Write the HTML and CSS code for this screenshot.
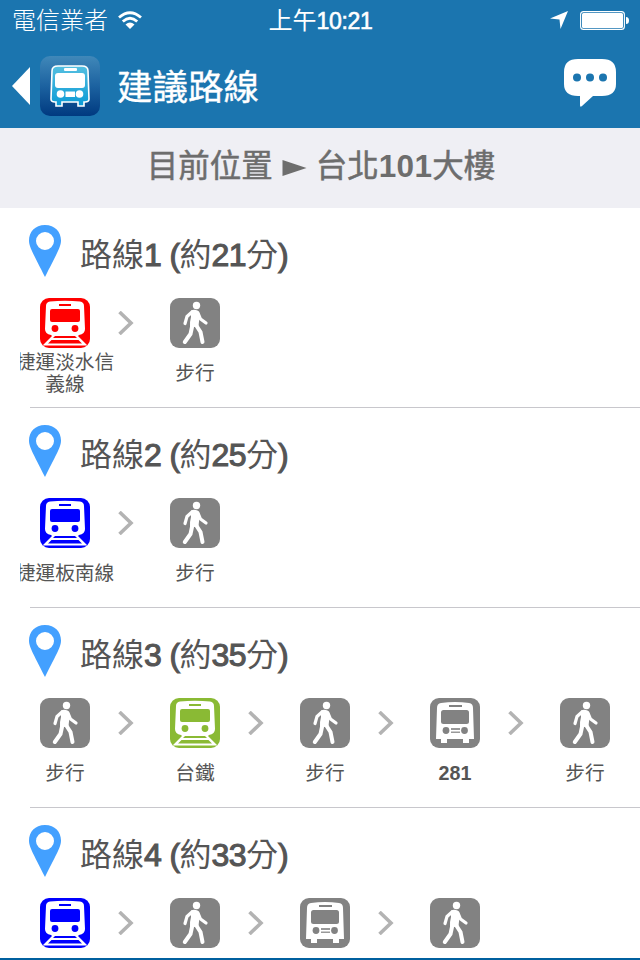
FILE: index.html
```html
<!DOCTYPE html>
<html lang="zh-Hant">
<head>
<meta charset="UTF-8">
<meta name="viewport" content="width=device-width, initial-scale=1.0">
<title>建議路線</title>
<link rel="stylesheet" href="styles.css">
</head>
<body>

<!-- shared icons -->
<svg class="icon-defs">
    <symbol id="pin" viewBox="0 0 34 52">
        <path fill="#43a0ff" fill-rule="evenodd" d="M17 0C7 0 1 7 1 15.500C1 22 5 28 17 52C29 28 33 22 33 15.500C33 7 27 0 17 0ZM17 7A9 9 0 1 1 17 25A9 9 0 1 1 17 7Z"/>
    </symbol>
    <symbol id="train" viewBox="0 0 50 50">
        <rect width="50" height="50" rx="9" fill="currentColor"/>
        <path fill="#fff" d="M6 8Q6 4 10 3.500Q25 2 40 3.500Q44 4 44 8L45 31Q45 36 39 37L38 38L47.500 47.500H2.500L12 38L11 37Q5 36 5 31Z"/>
        <rect x="19" y="6" width="12" height="2" fill="currentColor"/>
        <rect x="10" y="11" width="30" height="13" rx="2" fill="currentColor"/>
        <circle cx="15" cy="30.500" r="3.400" fill="currentColor"/>
        <circle cx="35" cy="30.500" r="3.400" fill="currentColor"/>
        <path fill="currentColor" d="M15 38H35L37 40H13ZM11.500 42H38.500L42 45.500H8Z"/>
    </symbol>
    <symbol id="walk" viewBox="0 0 50 50">
        <rect width="50" height="50" rx="9" fill="#828282"/>
        <circle cx="26.500" cy="7.500" r="3.700" fill="#fff"/>
        <path fill="#fff" d="M21 12.500Q24 11 27.500 12.500Q30 14 29.500 19L28.500 28L20 30Q19.500 24 21 19Z"/>
        <g fill="none" stroke="#fff" stroke-linecap="round" stroke-linejoin="round">
            <path stroke-width="3.200" d="M22 14L17 18.500L15 25.500M28 15L30.500 21L36 25"/>
            <path stroke-width="4" d="M22 29L20.500 36L14.800 44M26 27L30.500 34L32.500 44"/>
        </g>
    </symbol>
    <symbol id="bus" viewBox="0 0 50 50">
        <rect width="50" height="50" rx="9" fill="#828282"/>
        <path fill="#fff" d="M7 10Q7 5.500 11 5Q25 3 39 5Q43 5.500 43 10L44 41H39V45H33V41H17V45H11V41H6Z"/>
        <rect x="19" y="7" width="13" height="2" fill="#828282"/>
        <rect x="11" y="12" width="28" height="14" rx="2.500" fill="#828282"/>
        <circle cx="16" cy="32.500" r="3.400" fill="#828282"/>
        <circle cx="34.500" cy="32.500" r="3.400" fill="#828282"/>
        <path fill="#999" d="M21 30H30V32H21ZM21 33.500H30V35H21Z"/>
    </symbol>
    <symbol id="next" viewBox="0 0 16 24">
        <path fill="none" stroke="#b3b3b3" stroke-width="3.600" d="M1.500 1L13 12L1.500 23"/>
    </symbol>
</svg>

<div class="screen">
    <header class="header">
        <div class="status">
            <div class="carrier">
                <span>電信業者</span>
                <svg class="wifi" viewBox="0 0 24 18">
                    <path fill="none" stroke="#fff" stroke-width="2.800" d="M1 6.500Q12 -3 23 6.500M4.800 10.500Q12 4 19.200 10.500"/>
                    <path fill="#fff" d="M7.500 13.500Q12 9.500 16.500 13.500L12 18Z"/>
                </svg>
            </div>
            <div class="time">上午<b>10:21</b></div>
            <div class="indicators">
                <svg class="location" viewBox="0 0 18 18"><path fill="#fff" d="M18 0L10.500 18L9.500 8.500L0 7.500Z"/></svg>
                <svg class="battery" viewBox="0 0 49 19">
                    <rect x=".6" y=".6" width="43.800" height="17.800" rx="3" fill="none" stroke="#fff" stroke-width="1.100"/>
                    <rect x="2" y="2" width="41" height="15" rx="1.500" fill="#fff"/>
                    <path fill="#fff" d="M46 6Q49 6 49 9.500Q49 13 46 13Z"/>
                </svg>
            </div>
        </div>
        <div class="navbar">
            <svg class="back" viewBox="0 0 18 38"><path fill="#fff" d="M18 0V38L0 19Z"/></svg>
            <svg class="logo" viewBox="0 0 60 60">
                <defs>
                    <linearGradient id="logoBg" x1="0" y1="0" x2="0" y2="1">
                        <stop offset="0" stop-color="#4088b9"/>
                        <stop offset=".5" stop-color="#1c62a0"/>
                        <stop offset="1" stop-color="#003a80"/>
                    </linearGradient>
                    <linearGradient id="logoBus" x1="0" y1="0" x2="0" y2="1">
                        <stop offset="0" stop-color="#55bfe0"/>
                        <stop offset="1" stop-color="#0b9bd6"/>
                    </linearGradient>
                </defs>
                <rect width="60" height="60" rx="10" fill="url(#logoBg)"/>
                <path fill="url(#logoBus)" stroke="#fff" stroke-width="1.600" d="M12 15Q12 10 18 10H42Q48 10 48 15L49 43Q49 46 45 46H44V50H38V46H22V50H16V46H15Q11 46 11 43Z"/>
                <rect x="24" y="12" width="13" height="3" rx="1" fill="#fff"/>
                <rect x="15" y="17" width="30" height="15" rx="3" fill="#fff"/>
                <circle cx="20.500" cy="38" r="3.800" fill="#fff"/>
                <circle cx="39.500" cy="38" r="3.800" fill="#fff"/>
                <path fill="#fff" d="M25.500 35.500H35V41H25.500Z"/>
            </svg>
            <h1>建議路線</h1>
            <svg class="chat" viewBox="0 0 52 48">
                <path fill="#fff" d="M14 0H38Q52 0 52 13V25Q52 37 38 37H29L18 47Q16 49 16 46V37H14Q0 37 0 25V13Q0 0 14 0Z"/>
                <g fill="#1b75af"><circle cx="13" cy="18.500" r="4"/><circle cx="26" cy="18.500" r="4"/><circle cx="39" cy="18.500" r="4"/></g>
            </svg>
        </div>
    </header>

    <div class="trip">
        <span>目前位置</span>
        <svg class="to" viewBox="0 0 24 16"><path fill="#6d6d6d" d="M0 0L24 8L0 16Z"/></svg>
        <span>台北<b>101</b>大樓</span>
    </div>

    <main class="routes">
        <section class="route">
            <h2><svg class="pin"><use href="#pin"/></svg><span>路線<b>1 (</b>約<b>21</b>分<b>)</b></span></h2>
            <div class="steps">
                <div class="step red"><svg><use href="#train"/></svg><p>捷運淡水信<br>義線</p></div>
                <svg class="next"><use href="#next"/></svg>
                <div class="step"><svg><use href="#walk"/></svg><p>步行</p></div>
            </div>
        </section>
        <section class="route">
            <h2><svg class="pin"><use href="#pin"/></svg><span>路線<b>2 (</b>約<b>25</b>分<b>)</b></span></h2>
            <div class="steps">
                <div class="step blue"><svg><use href="#train"/></svg><p>捷運板南線</p></div>
                <svg class="next"><use href="#next"/></svg>
                <div class="step"><svg><use href="#walk"/></svg><p>步行</p></div>
            </div>
        </section>
        <section class="route">
            <h2><svg class="pin"><use href="#pin"/></svg><span>路線<b>3 (</b>約<b>35</b>分<b>)</b></span></h2>
            <div class="steps">
                <div class="step"><svg><use href="#walk"/></svg><p>步行</p></div>
                <svg class="next"><use href="#next"/></svg>
                <div class="step green"><svg><use href="#train"/></svg><p>台鐵</p></div>
                <svg class="next"><use href="#next"/></svg>
                <div class="step"><svg><use href="#walk"/></svg><p>步行</p></div>
                <svg class="next"><use href="#next"/></svg>
                <div class="step"><svg><use href="#bus"/></svg><p><b>281</b></p></div>
                <svg class="next"><use href="#next"/></svg>
                <div class="step"><svg><use href="#walk"/></svg><p>步行</p></div>
            </div>
        </section>
        <section class="route">
            <h2><svg class="pin"><use href="#pin"/></svg><span>路線<b>4 (</b>約<b>33</b>分<b>)</b></span></h2>
            <div class="steps">
                <div class="step blue"><svg><use href="#train"/></svg></div>
                <svg class="next"><use href="#next"/></svg>
                <div class="step"><svg><use href="#walk"/></svg></div>
                <svg class="next"><use href="#next"/></svg>
                <div class="step"><svg><use href="#bus"/></svg></div>
                <svg class="next"><use href="#next"/></svg>
                <div class="step"><svg><use href="#walk"/></svg></div>
            </div>
        </section>
    </main>
</div>

</body>
</html>
```

FILE: styles.css
```css
* {
    box-sizing: border-box;
}
body {
    margin: 0;
    background: #fff;
    color: #555;
    font-family: "Liberation Sans", "Noto Sans CJK TC", sans-serif;
}
h1, h2, p {
    margin: 0;
    font-weight: 400;
}
svg {
    display: block;
    flex: none;
}
.icon-defs {
    display: none;
}
.screen {
    display: flex;
    flex-direction: column;
    height: 960px;
    overflow: hidden;
    border-bottom: 2px solid #00609f;
}
.header {
    flex: none;
    height: 128px;
    background: #1b75af;
    color: #fff;
}
.status {
    display: grid;
    grid-template-columns: 1fr auto 1fr;
    align-items: center;
    height: 40px;
    padding: 0 11px 0 12px;
    font-size: 24px;
    line-height: 38px;
}
.carrier {
    display: flex;
    align-items: center;
    gap: 10px;
    font-weight: 300;
}
.carrier span,
.time {
    padding-top: 2px;
}
.wifi {
    width: 24px;
    height: 18px;
}
.time b {
    font-size: 23px;
    font-weight: 400;
    letter-spacing: -0.3px;
    -webkit-text-stroke: 0.6px #fff;
}
.indicators {
    display: flex;
    justify-content: flex-end;
    align-items: center;
    gap: 12px;
}
.location {
    width: 18px;
    height: 18px;
}
.battery {
    width: 49px;
    height: 19px;
}
.navbar {
    display: flex;
    align-items: center;
    height: 88px;
    padding: 0 24px 0 12px;
}
.back {
    width: 18px;
    height: 38px;
    margin: 3px 10px 0 0;
}
.logo {
    width: 60px;
    height: 60px;
    margin: 4px 17px 0 0;
}
h1 {
    flex: 1;
    padding-top: 8px;
    font-size: 35.5px;
    line-height: 50px;
    -webkit-text-stroke: 0.4px #fff;
}
.chat {
    width: 52px;
    height: 48px;
    margin-top: -3px;
}
.trip {
    display: flex;
    flex: none;
    justify-content: center;
    align-items: center;
    gap: 9px;
    height: 80px;
    padding: 0 0 10px 2px;
    background: #efeff4;
    color: #6d6d6d;
    font-size: 31.5px;
    -webkit-text-stroke: 0.5px #6d6d6d;
}
.trip b {
    letter-spacing: 0.3px;
    -webkit-text-stroke: 0;
}
.to {
    width: 25px;
    height: 16px;
    margin-top: 10px;
}
.routes {
    flex: 1;
    min-height: 0;
    overflow: hidden;
}
.route {
    height: 200px;
    padding: 16px 0 0 20px;
    background: linear-gradient(#c8c7cc, #c8c7cc) 30px 199px / 100% 1px no-repeat;
}
.route h2 {
    display: flex;
    align-items: center;
    height: 60px;
    font-size: 32px;
}
.route h2 span {
    padding-bottom: 5px;
}
.route h2 b {
    font-weight: 400;
    letter-spacing: -0.6px;
    -webkit-text-stroke: 1.1px #555;
}
.pin {
    width: 34px;
    height: 52px;
    margin: -6px 18px 0 8px;
}
.steps {
    display: flex;
    height: 110px;
    padding-top: 14px;
    overflow: hidden;
}
.step {
    flex: none;
    width: 90px;
}
.step svg {
    width: 50px;
    height: 50px;
    margin: 0 auto;
}
.step p {
    display: flex;
    justify-content: center;
    align-items: center;
    height: 44px;
    margin: 3px -5px 0;
    color: #555;
    font-size: 19.7px;
    line-height: 22px;
    text-align: center;
    white-space: nowrap;
}
.next {
    width: 16px;
    height: 24px;
    margin: 13px 16px 0 8px;
}
.red {
    color: #f00;
}
.blue {
    color: #00f;
}
.green {
    color: #8aba34;
}
```
